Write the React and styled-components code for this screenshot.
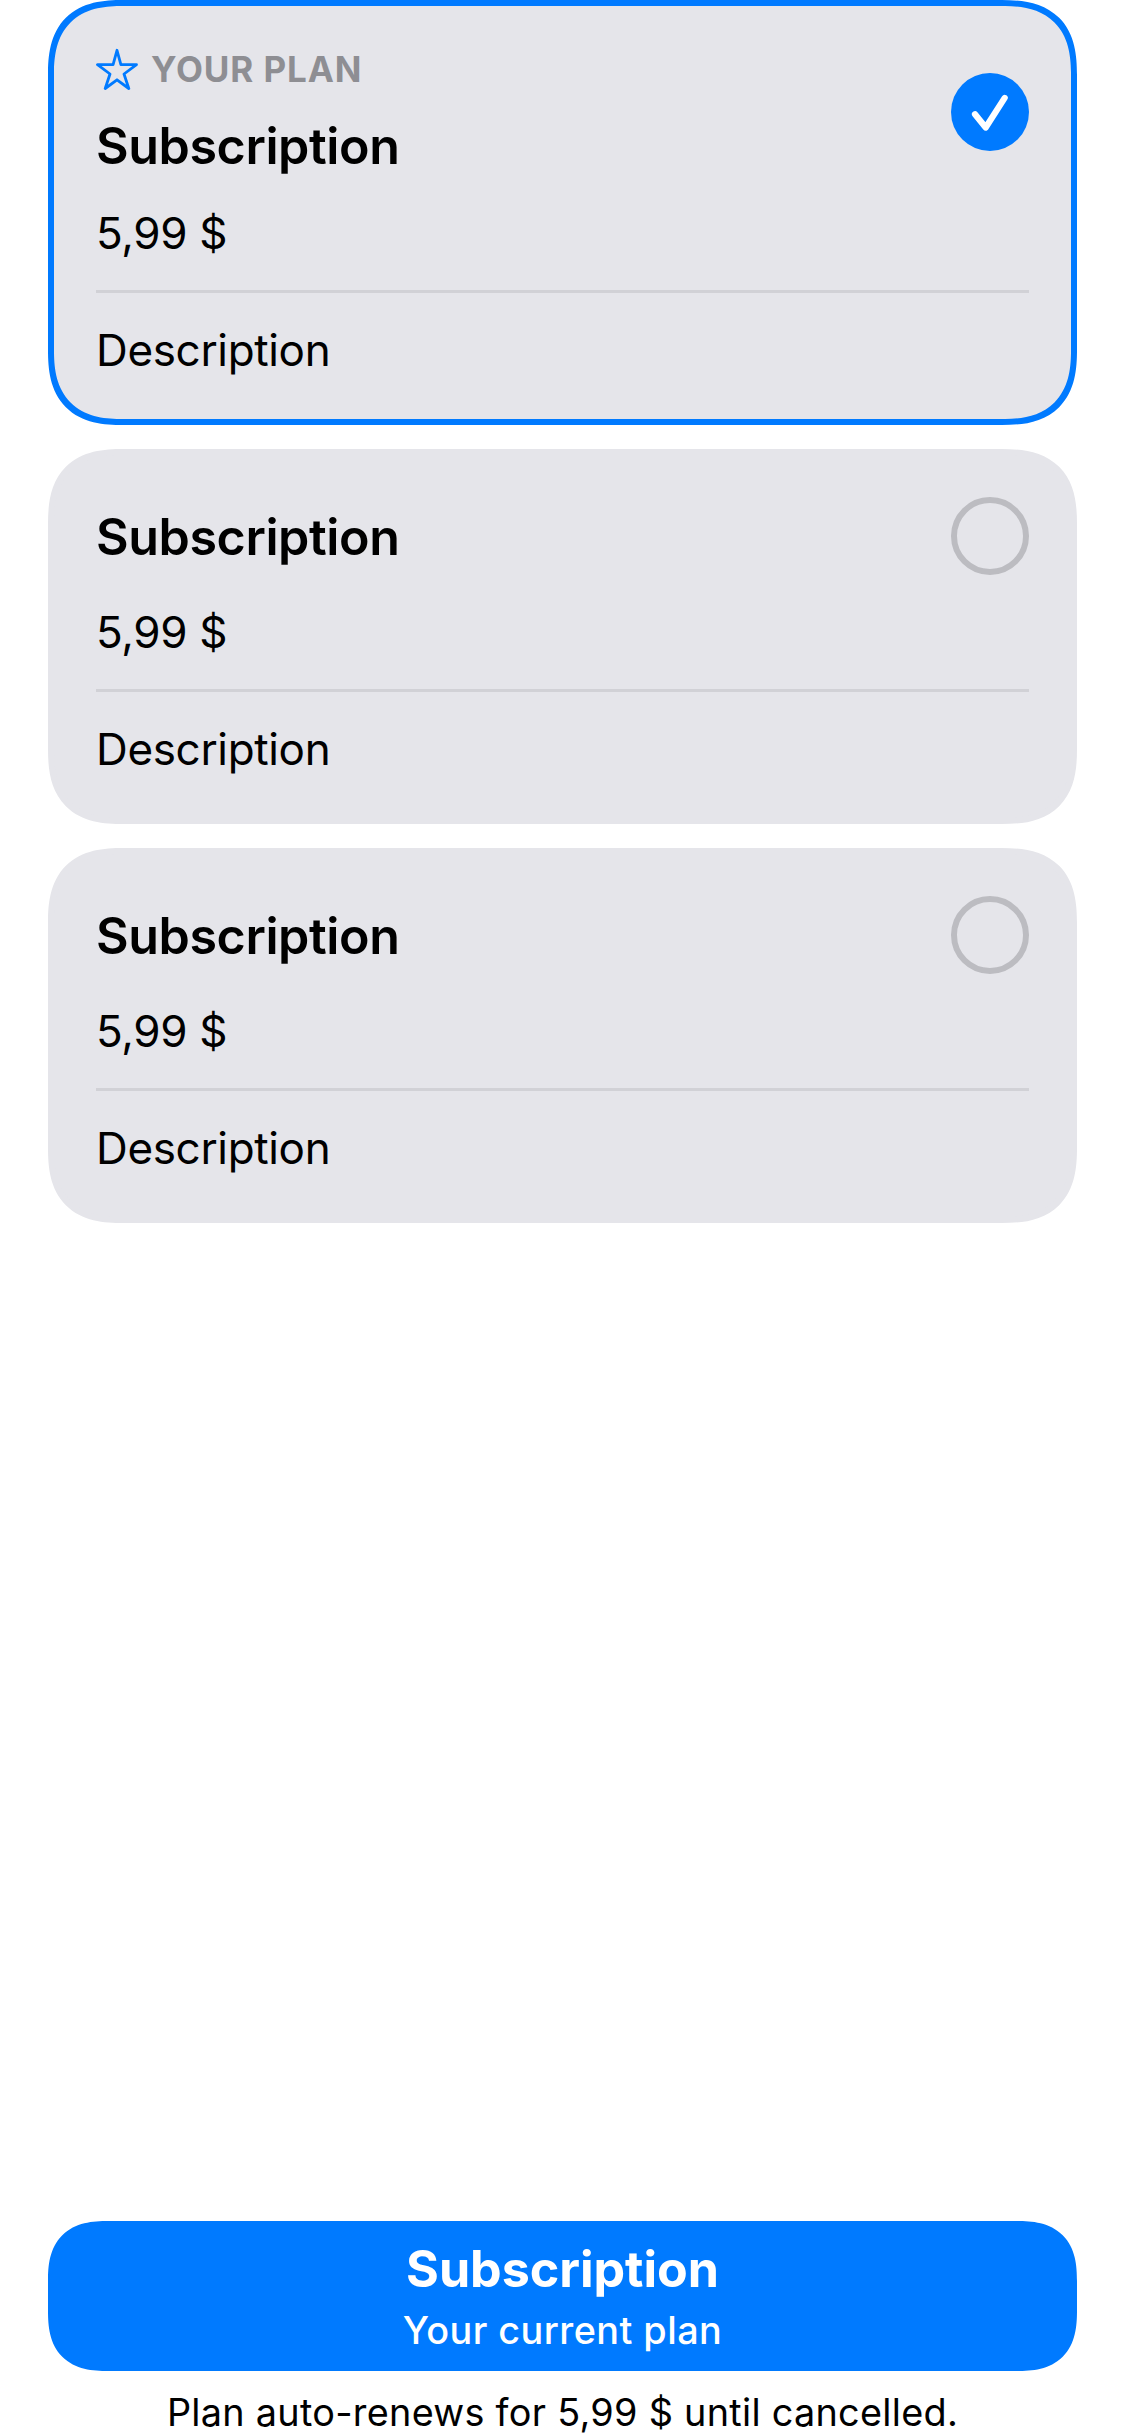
import React from "react";
import styled, { createGlobalStyle, css } from "styled-components";

const BLUE = "#007aff";

const GlobalStyle = createGlobalStyle`
  *, *::before, *::after { box-sizing: border-box; }
  body {
    margin: 0;
    background: #ffffff;
    color: #000000;
    font-family: Inter, "Liberation Sans", sans-serif;
    -webkit-font-smoothing: antialiased;
  }
  p, h2 { margin: 0; }
`;

const continuousCorners = (round, smooth) => css`
  border-radius: ${round}px;
  @supports (corner-shape: superellipse(1.35)) {
    border-radius: ${smooth}px;
    corner-shape: superellipse(1.35);
  }
`;

const Screen = styled.main`
  display: flex;
  flex-direction: column;
  justify-content: space-between;
  width: 1125px;
  height: 2436px;
  padding: 0 48px 1px;
`;

const PlanList = styled.section`
  display: flex;
  flex-direction: column;
  gap: 24px;
`;

const Card = styled.article`
  display: flex;
  flex-direction: column;
  gap: 30px;
  padding: 42px;
  border: 6px solid ${(p) => (p.$selected ? BLUE : "#e5e5ea")};
  background: #e5e5ea;
  ${continuousCorners(60, 75)}
`;

const CardHeader = styled.header`
  display: flex;
  align-items: center;
  justify-content: space-between;
  min-height: 78px;
`;

const Heading = styled.div`
  display: flex;
  flex-direction: column;
  gap: 24px;
`;

const Badge = styled.div`
  display: flex;
  align-items: center;
  gap: 13px;
  height: 43px;
`;

const BadgeLabel = styled.span`
  font-size: 35px;
  font-weight: 700;
  line-height: 43px;
  letter-spacing: 0.9px;
  color: #8e8e93;
`;

const Title = styled.h2`
  font-size: 50.2px;
  font-weight: 600;
  line-height: 61px;
  letter-spacing: -0.42px;
`;

const Body = styled.p`
  padding-top: 1px;
  font-size: 44px;
  font-weight: 400;
  line-height: 53px;
  letter-spacing: -0.34px;
`;

const Details = styled.div`
  padding-top: 30px;
  border-top: 3px solid #d1d1d6;
`;

const Radio = styled.span`
  display: grid;
  place-items: center;
  width: 78px;
  height: 78px;
  border-radius: 50%;
  border: ${(p) => (p.$checked ? "none" : "6px solid #bcbcc1")};
  background: ${(p) => (p.$checked ? BLUE : "transparent")};
`;

const Footer = styled.footer`
  display: flex;
  flex-direction: column;
  gap: 18px;
`;

const Action = styled.button`
  display: flex;
  flex-direction: column;
  align-items: center;
  gap: 8px;
  height: 150px;
  padding: 17px 0 18px;
  border: 0;
  background: ${BLUE};
  color: #ffffff;
  font-family: inherit;
  ${continuousCorners(48, 60)}
`;

const ActionTitle = styled.span`
  font-size: 50.2px;
  font-weight: 700;
  line-height: 61px;
  letter-spacing: -0.05px;
`;

const ActionNote = styled.span`
  font-size: 37.8px;
  font-weight: 500;
  line-height: 46px;
  letter-spacing: 0.46px;
`;

const Renewal = styled.p`
  font-size: 37.8px;
  line-height: 46px;
  letter-spacing: 0.28px;
  text-align: center;
`;

const StarIcon = () => (
  <svg width="42" height="43" viewBox="0 0 42 43" fill="none">
    <path
      d="M21 2.3 L24.9 16.6 H40.5 L28 26 L32.8 40.5 L21 31.8 L9.2 40.5 L14 26 L1.5 16.6 H17.1 Z"
      stroke={BLUE}
      strokeWidth="2.8"
      strokeLinejoin="round"
    />
  </svg>
);

const CheckIcon = () => (
  <svg width="78" height="78" viewBox="0 0 78 78" fill="none">
    <path
      d="M24 41.2 L34.7 54.5 L53.7 24.9"
      stroke="#ffffff"
      strokeWidth="6.2"
      strokeLinecap="round"
      strokeLinejoin="round"
    />
  </svg>
);

const plans = [
  { id: 1, current: true },
  { id: 2, current: false },
  { id: 3, current: false },
];

function PlanCard({ current }) {
  return (
    <Card $selected={current}>
      <CardHeader>
        <Heading>
          {current && (
            <Badge>
              <StarIcon />
              <BadgeLabel>YOUR PLAN</BadgeLabel>
            </Badge>
          )}
          <Title>Subscription</Title>
        </Heading>
        <Radio $checked={current}>{current && <CheckIcon />}</Radio>
      </CardHeader>
      <Body>5,99 $</Body>
      <Details>
        <Body>Description</Body>
      </Details>
    </Card>
  );
}

export default function App() {
  return (
    <>
      <GlobalStyle />
      <Screen>
        <PlanList>
          {plans.map((plan) => (
            <PlanCard key={plan.id} current={plan.current} />
          ))}
        </PlanList>
        <Footer>
          <Action>
            <ActionTitle>Subscription</ActionTitle>
            <ActionNote>Your current plan</ActionNote>
          </Action>
          <Renewal>Plan auto-renews for 5,99 $ until cancelled.</Renewal>
        </Footer>
      </Screen>
    </>
  );
}
